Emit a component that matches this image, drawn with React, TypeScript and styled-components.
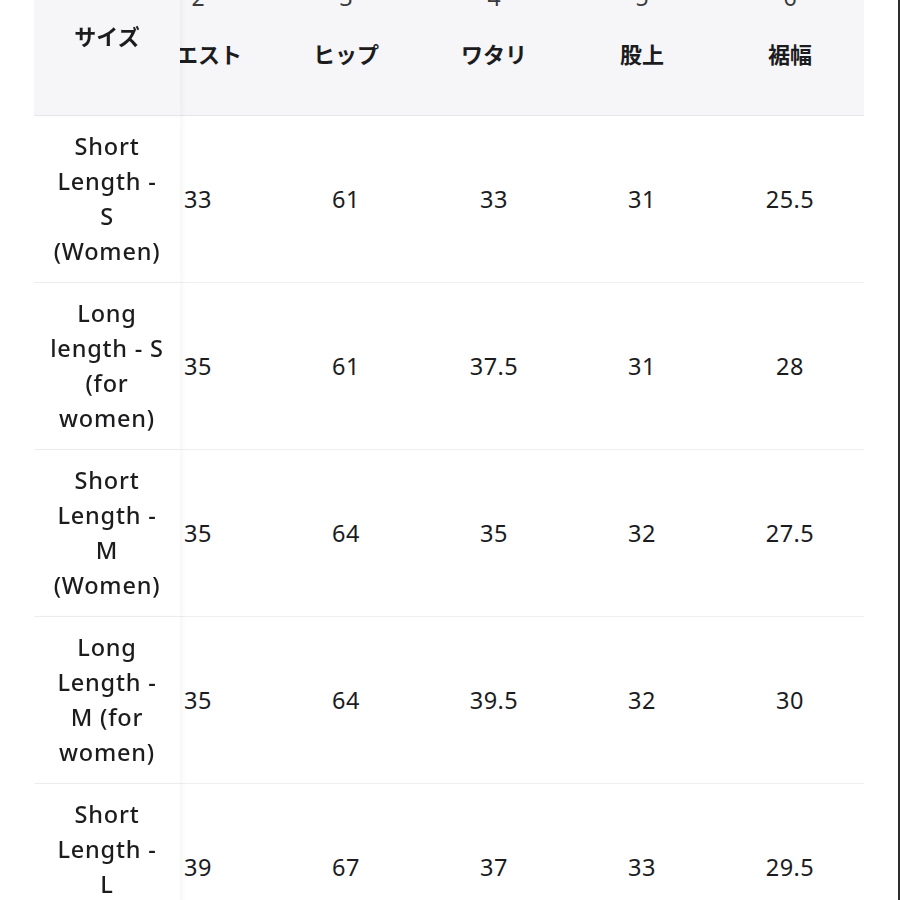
import React, { useLayoutEffect, useRef } from 'react';
import styled, { createGlobalStyle } from 'styled-components';

const GlobalStyle = createGlobalStyle`
  html, body {
    margin: 0;
    padding: 0;
    background: #fff;
  }
  body {
    font-family: 'Noto Sans', 'Noto Sans CJK JP', sans-serif;
    color: #1c1c1e;
  }
`;

const Page = styled.div`
  width: 898px;
  height: 900px;
  overflow: hidden;
  border-right: 2px solid #2e2e2e;
  background: #fff;
`;

// horizontally scrolled region, scrolled to its far right
const Scroller = styled.div`
  margin: -46px 0 0 34px;
  width: 830px;
  overflow: hidden;
`;

const Table = styled.table`
  border-collapse: separate;
  border-spacing: 0;
  table-layout: fixed;
  width: 886px;
`;

const HeadCell = styled.th<{ $sticky?: boolean }>`
  height: 161px;
  padding: 0;
  background: #f6f6f8;
  border-bottom: 1px solid #e6e6e9;
  vertical-align: ${(p) => (p.$sticky ? 'middle' : 'top')};
  text-align: center;
  font-size: 22px;
  font-weight: 700;
  ${(p) =>
    p.$sticky &&
    `
    position: sticky;
    left: 0;
    z-index: 2;
    box-shadow: 3px 0 4px rgba(0, 0, 0, 0.035);
  `}
`;

const HeadStack = styled.div`
  display: flex;
  flex-direction: column;
  align-items: center;
  gap: 27px;
  padding-top: 28px;
  white-space: nowrap;
`;

const ColNumber = styled.span`
  font-size: 23px;
  font-weight: 400;
  line-height: 30px;
  color: #3a3a3c;
`;

const ColLabel = styled.span`
  line-height: 30px;
`;

const SizeCell = styled.td`
  position: sticky;
  left: 0;
  z-index: 1;
  background: #fff;
  padding: 13px 0;
  border-bottom: 1px solid #efeff1;
  text-align: center;
  vertical-align: middle;
  font-size: 23.5px;
  font-weight: 500;
  line-height: 35px;
  letter-spacing: 0.8px;
  box-shadow: 3px 0 4px rgba(0, 0, 0, 0.035);
`;

const Line = styled.div`
  white-space: nowrap;
`;

const ValueCell = styled.td`
  padding: 0;
  border-bottom: 1px solid #efeff1;
  text-align: center;
  vertical-align: middle;
  font-size: 23.5px;
  letter-spacing: 0.5px;
  color: #1c1c1e;
`;

const columns = [
  { n: 2, label: 'ウエスト' },
  { n: 3, label: 'ヒップ' },
  { n: 4, label: 'ワタリ' },
  { n: 5, label: '股上' },
  { n: 6, label: '裾幅' },
];

const rows = [
  { size: ['Short', 'Length -', 'S', '(Women)'], values: ['33', '61', '33', '31', '25.5'] },
  { size: ['Long', 'length - S', '(for', 'women)'], values: ['35', '61', '37.5', '31', '28'] },
  { size: ['Short', 'Length -', 'M', '(Women)'], values: ['35', '64', '35', '32', '27.5'] },
  { size: ['Long', 'Length -', 'M (for', 'women)'], values: ['35', '64', '39.5', '32', '30'] },
  { size: ['Short', 'Length -', 'L', '(Women)'], values: ['39', '67', '37', '33', '29.5'] },
];

const App: React.FC = () => {
  const scrollRef = useRef<HTMLDivElement>(null);

  useLayoutEffect(() => {
    const el = scrollRef.current;
    if (el) el.scrollLeft = el.scrollWidth;
  }, []);

  return (
    <>
      <GlobalStyle />
      <Page>
        <Scroller ref={scrollRef}>
          <Table>
            <colgroup>
              <col style={{ width: 146 }} />
              {columns.map((c) => (
                <col key={c.n} style={{ width: 148 }} />
              ))}
            </colgroup>
            <thead>
              <tr>
                <HeadCell $sticky>サイズ</HeadCell>
                {columns.map((c) => (
                  <HeadCell key={c.n}>
                    <HeadStack>
                      <ColNumber>{c.n}</ColNumber>
                      <ColLabel>{c.label}</ColLabel>
                    </HeadStack>
                  </HeadCell>
                ))}
              </tr>
            </thead>
            <tbody>
              {rows.map((r, i) => (
                <tr key={i}>
                  <SizeCell>
                    {r.size.map((l, j) => (
                      <Line key={j}>{l}</Line>
                    ))}
                  </SizeCell>
                  {r.values.map((v, j) => (
                    <ValueCell key={j}>{v}</ValueCell>
                  ))}
                </tr>
              ))}
            </tbody>
          </Table>
        </Scroller>
      </Page>
    </>
  );
};

export default App;
